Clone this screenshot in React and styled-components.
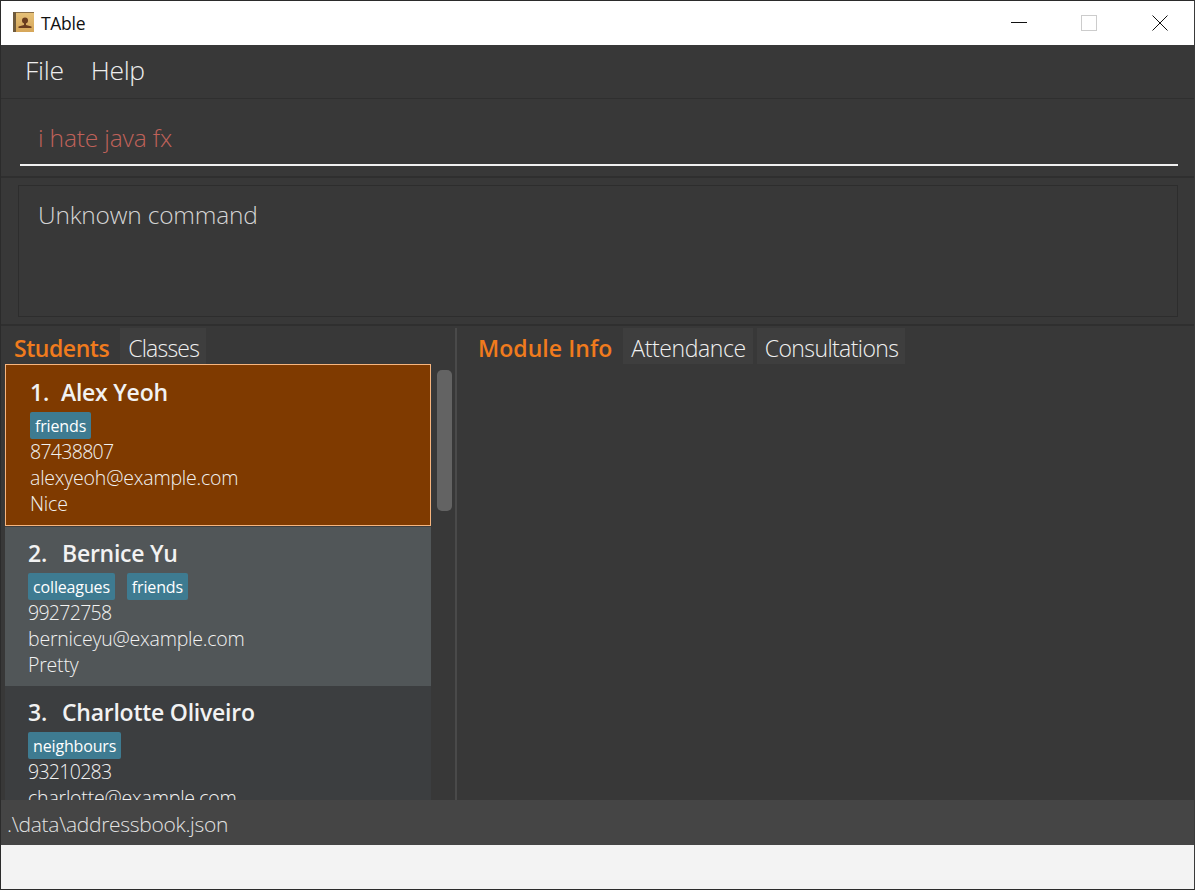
import React from 'react';
import styled, { createGlobalStyle } from 'styled-components';

const GlobalStyle = createGlobalStyle`
  html, body { margin: 0; padding: 0; background: #f3f3f3; }
  body { font-family: 'Open Sans', 'Noto Sans', sans-serif; }
`;

const Frame = styled.div`
  width: 1195px;
  height: 890px;
  box-sizing: border-box;
  border: 1px solid #2b2b2b;
  border-right-color: #3a3a3a;
  display: flex;
  flex-direction: column;
  overflow: hidden;
  background: #f3f3f3;
`;

const TitleBar = styled.div`
  height: 44px;
  flex: none;
  background: #fff;
  display: flex;
  align-items: center;
  padding-left: 12px;
`;

const AppName = styled.span`
  margin-left: 6px;
  font-family: 'Open Sans', sans-serif;
  font-size: 17.500px;
  letter-spacing: -0.3px;
  color: #111;
`;

const WindowButtons = styled.div`
  margin-left: auto;
  display: flex;
`;

const WindowButton = styled.div`
  width: ${(props) => props.$width}px;
  height: 44px;
  display: flex;
  align-items: center;
  justify-content: center;
`;

const MenuBar = styled.div`
  height: 53px;
  flex: none;
  background: #383838;
  border-bottom: 1px solid #2f2f2f;
  display: flex;
  align-items: center;
  padding-left: 24px;
  gap: 27px;
`;

const MenuItem = styled.span`
  font-size: 26.500px;
  font-weight: 300;
  letter-spacing: -0.3px;
  color: #eee;
  margin-bottom: 4px;
`;

const CommandPane = styled.div`
  height: 79px;
  flex: none;
  box-sizing: border-box;
  background: #383838;
  border-bottom: 2px solid #2f2f2f;
  padding: 0 16px 10px 19px;
  display: flex;
`;

const CommandField = styled.div`
  flex: 1;
  border-bottom: 2px solid #f0f0f0;
  display: flex;
  align-items: center;
  padding: 12px 18px 0;
  font-size: 24.500px;
  font-weight: 300;
  letter-spacing: -0.15px;
  color: #c0625a;
`;

const ResultPane = styled.div`
  height: 148px;
  flex: none;
  box-sizing: border-box;
  background: #383838;
  border-bottom: 2px solid #2f2f2f;
  padding: 7px 16px 7px 17px;
  display: flex;
`;

const ResultBox = styled.div`
  flex: 1;
  border: 1px solid #2d2d2d;
  padding: 12px 19px;
  font-size: 24.500px;
  font-weight: 300;
  letter-spacing: -0.2px;
  color: #d4d4d4;
`;

const SplitArea = styled.div`
  height: 474px;
  flex: none;
  background: #383838;
  display: flex;
  overflow: hidden;
`;

const LeftPane = styled.div`
  width: 454px;
  flex: none;
  border-right: 2px solid #4a4a4a;
  margin-top: 2px;
  display: flex;
  flex-direction: column;
`;

const RightPane = styled.div`
  flex: 1;
  margin-top: 2px;
`;

const TabRow = styled.div`
  height: 36px;
  flex: none;
  display: flex;
  gap: 4px;
  padding-left: ${(props) => props.$inset}px;
`;

const Tab = styled.div`
  display: flex;
  align-items: center;
  padding: 4px 7px 0 8px;
  box-sizing: border-box;
  font-size: 23px;
  letter-spacing: ${(props) => props.$spacing}px;
  font-weight: ${(props) => (props.$active ? 600 : 300)};
  color: ${(props) => (props.$active ? '#f07b1d' : '#f0f0f0')};
  background: ${(props) => (props.$active ? 'transparent' : '#3e3e3e')};
`;

const ListRow = styled.div`
  flex: 1;
  min-height: 0;
  display: flex;
  padding-left: 4px;
`;

const StudentList = styled.div`
  width: 426px;
  flex: none;
  background: #3c3e40;
  overflow: hidden;
`;

const Card = styled.div`
  box-sizing: border-box;
  height: ${(props) => props.$height}px;
  padding: ${(props) => (props.$selected ? 11 : 10)}px 0 0 ${(props) => (props.$selected ? 24 : 23)}px;
  background: ${(props) => props.$bg};
  border: ${(props) => (props.$selected ? '1px solid #f7b57e' : 'none')};
  margin-bottom: ${(props) => (props.$selected ? 1 : 0)}px;
  color: #f2f2f2;
`;

const CardName = styled.div`
  display: flex;
  font-size: 23px;
  line-height: 32px;
  font-weight: 600;
  letter-spacing: -0.25px;
`;

const CardIndex = styled.span`
  width: ${(props) => (props.$selected ? 31 : 34)}px;
`;

const TagRow = styled.div`
  display: flex;
  gap: 12px;
  margin: 4px 0 0;
`;

const Tag = styled.span`
  height: 27px;
  display: flex;
  align-items: center;
  padding: 0 5px;
  border-radius: 2px;
  background: #3e7b91;
  color: #fff;
  font-size: 16px;
  font-weight: 500;
  letter-spacing: -0.15px;
`;

const CardLine = styled.div`
  font-size: 19.500px;
  line-height: 26px;
  font-weight: 300;
  letter-spacing: -0.2px;
`;

const PhoneLine = styled(CardLine)`
  letter-spacing: -0.7px;
`;

const ScrollTrack = styled.div`
  flex: 1;
  padding: 6px 3px 0 6px;
`;

const ScrollThumb = styled.div`
  height: 141px;
  border-radius: 5px;
  background: #636363;
`;

const StatusBar = styled.div`
  height: 45px;
  flex: none;
  background: #454545;
  display: flex;
  align-items: center;
  padding: 2px 0 0 6px;
  box-sizing: border-box;
  font-size: 21px;
  font-weight: 300;
  letter-spacing: -0.3px;
  color: #e2e2e2;
`;

const AppIcon = () => (
  <svg width="22" height="22" viewBox="0 0 22 22">
    <defs>
      <linearGradient id="book" x1="0" y1="0" x2="0" y2="1">
        <stop offset="0" stopColor="#e6c27a" />
        <stop offset="1" stopColor="#d6a659" />
      </linearGradient>
    </defs>
    <rect x="0" y="0" width="21" height="20" fill="url(#book)" />
    <rect x="0" y="0" width="3" height="20" fill="#6f5a3c" />
    <rect x="3" y="0" width="18" height="1" fill="#8a6f48" />
    <circle cx="12" cy="8.500" r="3" fill="#6b3d1e" />
    <path d="M11 11h2v2l5.500 1.500V16h-13v-1.500L11 13z" fill="#6b3d1e" />
  </svg>
);

const Minimize = () => (
  <svg width="16" height="16" viewBox="0 0 16 16">
    <path d="M0 7.500h16" stroke="#111" strokeWidth="1" />
  </svg>
);

const Maximize = () => (
  <svg width="16" height="16" viewBox="0 0 16 16">
    <rect x="0.500" y="0.500" width="15" height="15" fill="none" stroke="#ccc" />
  </svg>
);

const Close = () => (
  <svg width="16" height="16" viewBox="0 0 16 16">
    <path d="M0.500 0.500l15 15M15.500 0.500l-15 15" stroke="#111" strokeWidth="1" />
  </svg>
);

const students = [
  { index: '1.', name: 'Alex Yeoh', tags: ['friends'], phone: '87438807', email: 'alexyeoh@example.com', note: 'Nice', bg: '#7f3a00', height: 162, selected: true },
  { index: '2.', name: 'Bernice Yu', tags: ['colleagues', 'friends'], phone: '99272758', email: 'berniceyu@example.com', note: 'Pretty', bg: '#515658', height: 159 },
  { index: '3.', name: 'Charlotte Oliveiro', tags: ['neighbours'], phone: '93210283', email: 'charlotte@example.com', bg: '#3c3e40', height: 159 },
];

export default function App() {
  return (
    <Frame>
      <GlobalStyle />
      <TitleBar>
        <AppIcon />
        <AppName>TAble</AppName>
        <WindowButtons>
          <WindowButton $width={66}><Minimize /></WindowButton>
          <WindowButton $width={73}><Maximize /></WindowButton>
          <WindowButton $width={69}><Close /></WindowButton>
        </WindowButtons>
      </TitleBar>
      <MenuBar>
        <MenuItem>File</MenuItem>
        <MenuItem>Help</MenuItem>
      </MenuBar>
      <CommandPane>
        <CommandField>i hate java fx</CommandField>
      </CommandPane>
      <ResultPane>
        <ResultBox>Unknown command</ResultBox>
      </ResultPane>
      <SplitArea>
        <LeftPane>
          <TabRow $inset={5}>
            <Tab $active $spacing={-0.45}>Students</Tab>
            <Tab $spacing={-0.8}>Classes</Tab>
          </TabRow>
          <ListRow>
            <StudentList>
              {students.map((s) => (
                <Card key={s.name} $bg={s.bg} $height={s.height} $selected={s.selected}>
                  <CardName>
                    <CardIndex $selected={s.selected}>{s.index}</CardIndex>
                    {s.name}
                  </CardName>
                  <TagRow>
                    {s.tags.map((t) => <Tag key={t}>{t}</Tag>)}
                  </TagRow>
                  <PhoneLine>{s.phone}</PhoneLine>
                  <CardLine>{s.email}</CardLine>
                  {s.note && <CardLine>{s.note}</CardLine>}
                </Card>
              ))}
            </StudentList>
            <ScrollTrack>
              <ScrollThumb />
            </ScrollTrack>
          </ListRow>
        </LeftPane>
        <RightPane>
          <TabRow $inset={13}>
            <Tab $active $spacing={0.05}>Module Info</Tab>
            <Tab $spacing={-0.4}>Attendance</Tab>
            <Tab $spacing={-0.6}>Consultations</Tab>
          </TabRow>
        </RightPane>
      </SplitArea>
      <StatusBar>.\data\addressbook.json</StatusBar>
    </Frame>
  );
}
